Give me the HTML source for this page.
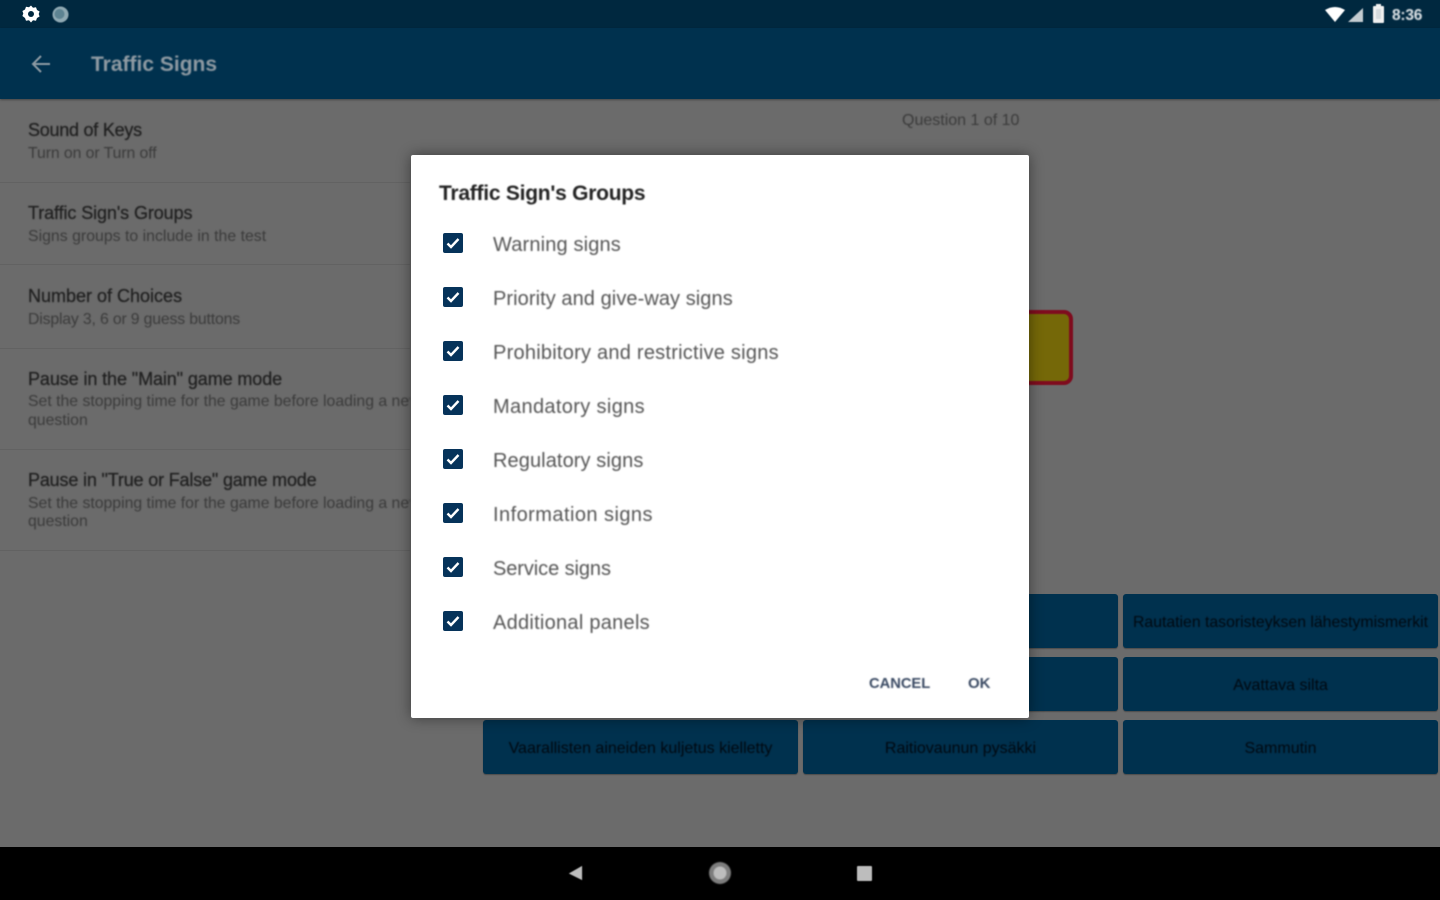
<!DOCTYPE html>
<html lang="en"><head><meta charset="utf-8"><title>Traffic Signs</title>
<style>
*{box-sizing:border-box;margin:0;padding:0}
html,body{width:1440px;height:900px;overflow:hidden;background:#6b6b6b;font-family:"Liberation Sans",sans-serif}
.abs,.t{position:absolute;white-space:nowrap}
.t{filter:blur(.7px)}
#status{left:0;top:0;width:1440px;height:28px;background:#00283f}
#bar{left:0;top:28px;width:1440px;height:71px;background:#00314e;box-shadow:0 1px 2px rgba(0,0,0,.35)}
.h{font-size:18px;color:#1f1f1f;left:28px;letter-spacing:-.1px;-webkit-text-stroke:.25px #1f1f1f}
.s{font-size:15.8px;color:#3a3a3a;left:28px}
.div{left:0;width:410px;height:1px;background:#626262}
.btn{height:54px;width:315px;background:#00314e;border-radius:3px;color:#000810;font-size:16px;text-align:center;line-height:57px;box-shadow:0 1px 1px rgba(0,0,0,.3)}
.btn span{filter:blur(.7px);display:inline-block}
#dlg{left:411px;top:155px;width:618px;height:563px;background:#fff;border-radius:2px;box-shadow:0 0 14px rgba(0,0,0,.45)}
.cb{left:443px;width:20px;height:20px;background:#06335a;border-radius:2px;filter:blur(.3px)}
.cb svg{display:block}
.it{left:493px;font-size:20px;color:#555}
#nav{left:0;top:847px;width:1440px;height:53px;background:#000}
</style></head><body>
<div class="abs" style="left:0;top:98px;width:1440px;height:749px;background:#6b6b6b"></div>
<div class="abs" id="status"></div>
<div class="abs" id="bar"></div>

<svg class="abs" style="left:22px;top:5px;filter:blur(.3px)" width="18" height="18" viewBox="0 0 18 18"><path fill="#fff" d="M9 0.5l2 2.2 3-.5 1 2.8 2.6 1.5-.9 2.5.9 2.5-2.6 1.5-1 2.8-3-.5-2 2.2-2-2.2-3 .5-1-2.8L.4 11l.9-2.5L.4 6l2.6-1.5 1-2.8 3 .5z"/><circle cx="9" cy="9" r="3" fill="#00283f"/></svg>
<svg class="abs" style="left:52px;top:6px;filter:blur(.4px)" width="17" height="17" viewBox="0 0 17 17"><circle cx="8.5" cy="8.5" r="8" fill="#8fa9b3"/><circle cx="7.5" cy="8" r="5" fill="#5d8392"/></svg>

<svg class="abs" style="left:1325px;top:5px;filter:blur(.4px)" width="40" height="18" viewBox="0 0 40 18"><path fill="#fff" d="M0 5Q10-1 20 5L10 17z"/><path fill="#c4ccd1" d="M38 3V17H23z"/></svg>
<svg class="abs" style="left:1372px;top:4px;filter:blur(.4px)" width="13" height="20" viewBox="0 0 13 20"><path fill="#f0f0f0" d="M4 0h5v2h2q1 0 1 1v15q0 1-1 1H2q-1 0-1-1V3q0-1 1-1h2z"/><rect x="4" y="5" width="5" height="10" fill="#d5dadd"/></svg>
<div class="t" style="left:1392px;top:7px;font-size:15.5px;font-weight:700;color:#dfe5e8;letter-spacing:-.2px">8:36</div>

<svg class="abs" style="left:30px;top:53px;filter:blur(.5px)" width="22" height="22" viewBox="0 0 22 22"><path fill="none" stroke="#8c9aa3" stroke-width="2" d="M20 11H3M11 3l-8 8 8 8"/></svg>
<div class="t" style="left:91px;top:53px;font-size:21px;font-weight:700;color:#8f9ba3">Traffic Signs</div>

<div class="t h" style="top:120px;letter-spacing:-.25px">Sound of Keys</div>
<div class="t s" style="top:145px;letter-spacing:-.07px">Turn on or Turn off</div>
<div class="abs div" style="top:182px"></div>
<div class="t h" style="top:203px">Traffic Sign's Groups</div>
<div class="t s" style="top:228px;letter-spacing:.03px">Signs groups to include in the test</div>
<div class="abs div" style="top:264px"></div>
<div class="t h" style="top:286px;letter-spacing:0">Number of Choices</div>
<div class="t s" style="top:311px;letter-spacing:-.16px">Display 3, 6 or 9 guess buttons</div>
<div class="abs div" style="top:348px"></div>
<div class="t h" style="top:369px">Pause in the "Main" game mode</div>
<div class="t s" style="top:393px;width:382px;overflow:hidden">Set the stopping time for the game before loading a new</div>
<div class="t s" style="top:412px">question</div>
<div class="abs div" style="top:449px"></div>
<div class="t h" style="top:470px;letter-spacing:-.17px">Pause in "True or False" game mode</div>
<div class="t s" style="top:495px;width:382px;overflow:hidden">Set the stopping time for the game before loading a new</div>
<div class="t s" style="top:513px">question</div>
<div class="abs div" style="top:550px"></div>

<div class="t" style="left:902px;top:112px;font-size:16px;color:#3a3a3a">Question 1 of 10</div>

<div class="abs" style="left:960px;top:310px;width:113px;height:75px;background:#756808;border:4px solid #7f0c1e;border-radius:9px;filter:blur(.4px)"></div>

<div class="abs btn" style="left:803px;top:594px"></div>
<div class="abs btn" style="left:1123px;top:594px;line-height:58px"><span style="font-size:15.8px">Rautatien tasoristeyksen lähestymismerkit</span></div>
<div class="abs btn" style="left:803px;top:657px"></div>
<div class="abs btn" style="left:1123px;top:657px"><span>Avattava silta</span></div>
<div class="abs btn" style="left:483px;top:720px"><span>Vaarallisten aineiden kuljetus kielletty</span></div>
<div class="abs btn" style="left:803px;top:720px"><span>Raitiovaunun pysäkki</span></div>
<div class="abs btn" style="left:1123px;top:720px"><span>Sammutin</span></div>

<div class="abs" id="dlg"></div>
<div class="t" style="left:439px;top:182px;font-size:21px;font-weight:700;color:#232323;letter-spacing:-.25px">Traffic Sign's Groups</div>

<div class="abs cb" style="top:233px"><svg width="20" height="20" viewBox="0 0 20 20"><path fill="none" stroke="#fff" stroke-width="2.4" d="M4.5 10.5l3.5 3.5 7.5-8"/></svg></div>
<div class="t it" style="top:234px;letter-spacing:.15px">Warning signs</div>
<div class="abs cb" style="top:287px"><svg width="20" height="20" viewBox="0 0 20 20"><path fill="none" stroke="#fff" stroke-width="2.4" d="M4.5 10.5l3.5 3.5 7.5-8"/></svg></div>
<div class="t it" style="top:288px;letter-spacing:.07px">Priority and give-way signs</div>
<div class="abs cb" style="top:341px"><svg width="20" height="20" viewBox="0 0 20 20"><path fill="none" stroke="#fff" stroke-width="2.4" d="M4.5 10.5l3.5 3.5 7.5-8"/></svg></div>
<div class="t it" style="top:342px;letter-spacing:.24px">Prohibitory and restrictive signs</div>
<div class="abs cb" style="top:395px"><svg width="20" height="20" viewBox="0 0 20 20"><path fill="none" stroke="#fff" stroke-width="2.4" d="M4.5 10.5l3.5 3.5 7.5-8"/></svg></div>
<div class="t it" style="top:396px;letter-spacing:.35px">Mandatory signs</div>
<div class="abs cb" style="top:449px"><svg width="20" height="20" viewBox="0 0 20 20"><path fill="none" stroke="#fff" stroke-width="2.4" d="M4.5 10.5l3.5 3.5 7.5-8"/></svg></div>
<div class="t it" style="top:450px;letter-spacing:.09px">Regulatory signs</div>
<div class="abs cb" style="top:503px"><svg width="20" height="20" viewBox="0 0 20 20"><path fill="none" stroke="#fff" stroke-width="2.4" d="M4.5 10.5l3.5 3.5 7.5-8"/></svg></div>
<div class="t it" style="top:504px;letter-spacing:.45px">Information signs</div>
<div class="abs cb" style="top:557px"><svg width="20" height="20" viewBox="0 0 20 20"><path fill="none" stroke="#fff" stroke-width="2.4" d="M4.5 10.5l3.5 3.5 7.5-8"/></svg></div>
<div class="t it" style="top:558px;letter-spacing:-.08px">Service signs</div>
<div class="abs cb" style="top:611px"><svg width="20" height="20" viewBox="0 0 20 20"><path fill="none" stroke="#fff" stroke-width="2.4" d="M4.5 10.5l3.5 3.5 7.5-8"/></svg></div>
<div class="t it" style="top:612px;letter-spacing:.27px">Additional panels</div>

<div class="t" style="left:869px;top:676px;font-size:14.7px;font-weight:700;color:#3a4a63">CANCEL</div>
<div class="t" style="left:968px;top:675px;font-size:15px;font-weight:700;color:#3a4a63">OK</div>

<div class="abs" id="nav"></div>
<svg class="abs" style="left:566px;top:863px;filter:blur(.5px)" width="22" height="22" viewBox="0 0 22 22"><path fill="#bdbdbd" d="M18 3V18L4 11z" transform="translate(-1 0) scale(.95)"/></svg>
<svg class="abs" style="left:708px;top:861px;filter:blur(.7px)" width="24" height="24" viewBox="0 0 24 24"><circle cx="12" cy="12" r="11" fill="#7d7d7d"/><circle cx="12" cy="12" r="6.5" fill="#bdbdbd"/></svg>
<div class="abs" style="left:857px;top:866px;width:15px;height:15px;background:#bdbdbd;border-radius:1px;filter:blur(.5px)"></div>
</body></html>
